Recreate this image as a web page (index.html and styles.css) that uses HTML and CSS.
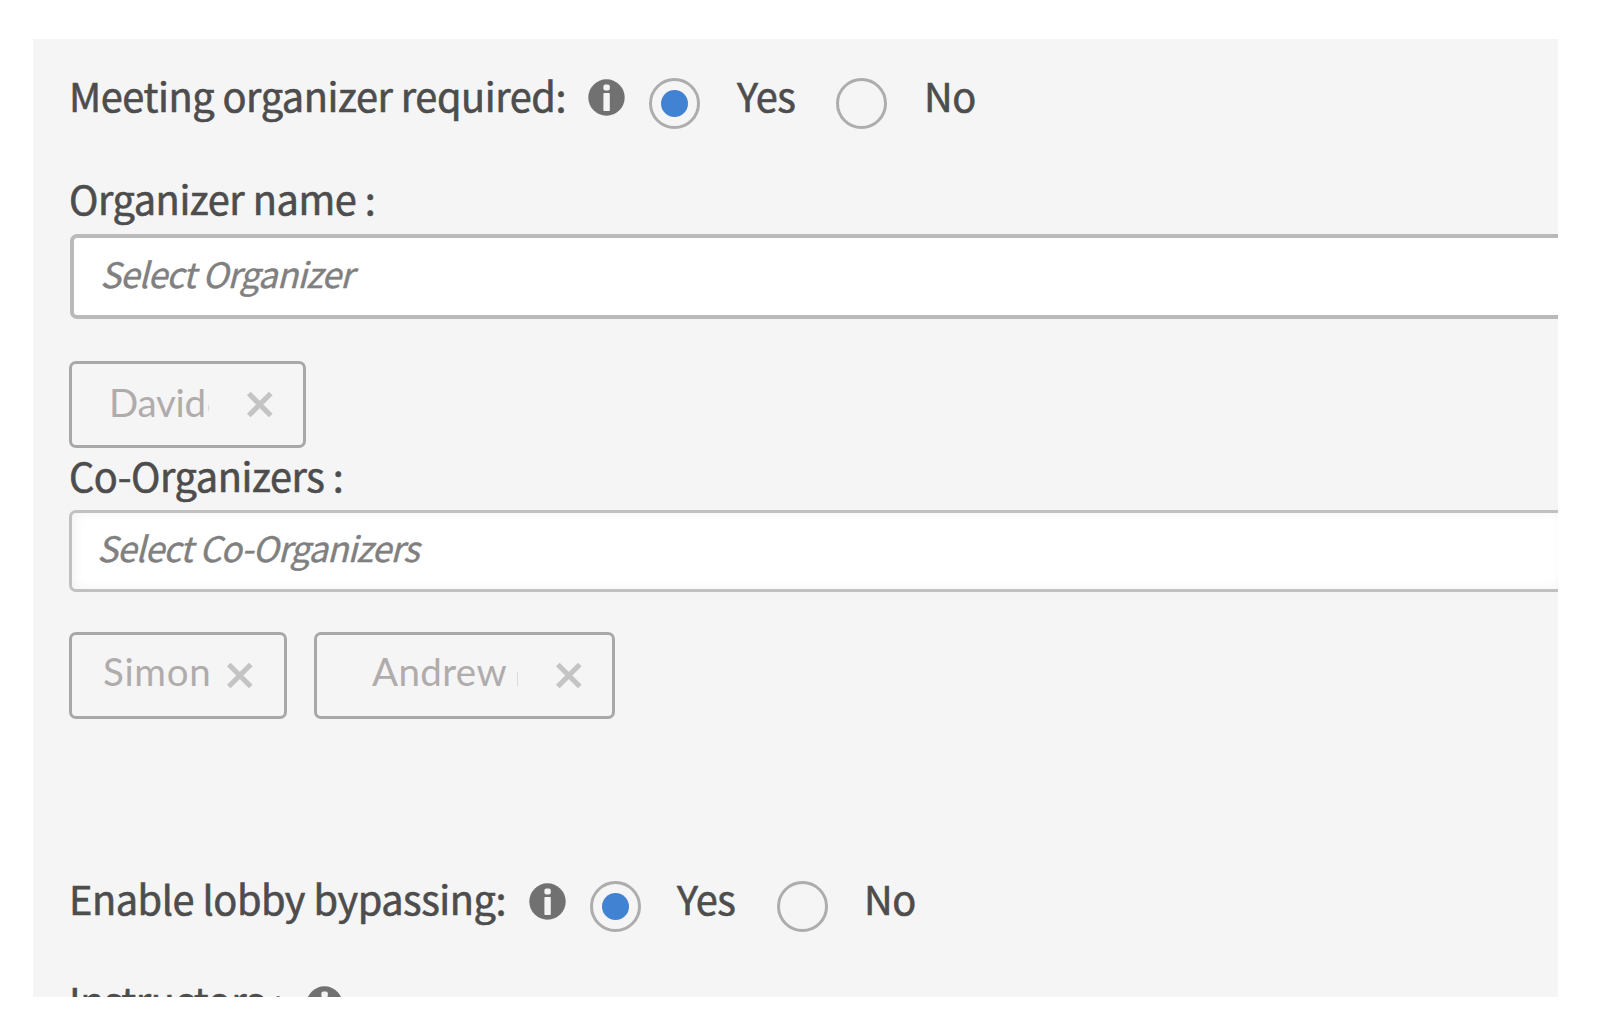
FILE: index.html
```html
<!DOCTYPE html>
<html lang="en">
<head>
<meta charset="utf-8">
<title>Meeting settings</title>
<link rel="stylesheet" href="styles.css">
</head>
<body>
<svg width="0" height="0" class="defs">
  <symbol id="info" viewBox="0 0 37 37"><circle cx="18.5" cy="18.5" r="18.2" fill="#717171"/><rect x="15.4" y="5.5" width="6.4" height="6" rx="2" fill="#f4f4f4"/><rect x="15.4" y="14" width="6.4" height="18" rx=".8" fill="#f4f4f4"/></symbol>
  <symbol id="close" viewBox="0 0 28 28"><path d="M2.8 2.5 24.8 24.5M24.8 2.5 2.8 24.5" stroke="#c4c4c4" stroke-width="5.2" fill="none"/></symbol>
</svg>
<main class="panel">
  <div class="row required">
    <span class="label">Meeting organizer required:</span>
    <svg class="info"><use href="#info"/></svg>
    <span class="radio on"></span><span class="option yes">Yes</span>
    <span class="radio"></span><span class="option no">No</span>
  </div>
  <div class="row name"><span class="label">Organizer name :</span></div>
  <div class="field organizer"><span>Select Organizer</span></div>
  <div class="chips first">
    <div class="chip david"><span>David</span><i class="tick"></i><svg class="close"><use href="#close"/></svg></div>
  </div>
  <div class="row co"><span class="label">Co-Organizers :</span></div>
  <div class="field coorganizers"><span>Select Co-Organizers</span></div>
  <div class="chips second">
    <div class="chip simon"><span>Simon</span><svg class="close"><use href="#close"/></svg></div>
    <div class="chip andrew"><span>Andrew</span><i class="tick"></i><svg class="close"><use href="#close"/></svg></div>
  </div>
  <div class="row lobby">
    <span class="label">Enable lobby bypassing:</span>
    <svg class="info"><use href="#info"/></svg>
    <span class="radio on"></span><span class="option yes">Yes</span>
    <span class="radio"></span><span class="option no">No</span>
  </div>
  <div class="row instructors">
    <span class="label">Instructors :</span>
    <svg class="info"><use href="#info"/></svg>
  </div>
</main>
</body>
</html>
```

FILE: styles.css
```css
* { box-sizing: border-box; }
body {
  margin: 0;
  background: #fff;
  font-family: "Noto Sans CJK SC", "Noto Sans", sans-serif;
  color: #4d4d4d;
}
.defs { position: absolute; }
.panel {
  width: 1525px;
  height: 958px;
  margin: 39px 0 0 33px;
  padding: 28px 0 0 36px;
  background: #f5f5f5;
  overflow: hidden;
}
.row {
  display: flex;
  align-items: center;
  height: 52px;
  font-size: 39.7px;
  letter-spacing: -.45px;
  line-height: 52px;
  white-space: nowrap;
  -webkit-text-stroke: .6px #4d4d4d;
}
.label, .option { flex: none; padding-top: 1px; }
.required .label, .required .option, .name .label { padding-top: 3px; }
.required .label { width: 519px; }
.lobby .label { width: 460px; }
.instructors .label { width: 237px; padding-top: 0; }
.info { flex: none; width: 37px; height: 37px; margin-top: 9px; }
.radio {
  flex: none;
  display: grid;
  place-items: center;
  width: 51px;
  height: 51px;
  margin: 20px 0 0 24px;
  border: 3px solid #adadad;
  border-radius: 50%;
}
.lobby .radio { margin-top: 19px; }
.on::after {
  content: "";
  width: 27px;
  height: 27px;
  border-radius: 50%;
  background: #4282d3;
}
.yes { width: 99px; margin-left: 37px; }
.lobby .yes { width: 100px; margin-left: 36px; }
.yes + .radio { margin-left: 0; }
.no { margin-left: 37px; }
.lobby .no { margin-left: 36px; }

.name { margin-top: 51px; }
.field {
  border: 4px solid #bababa;
  border-right: 0;
  border-radius: 7px 0 0 7px;
  background: #fff;
  font-size: 35px;
  font-style: italic;
  letter-spacing: -.85px;
  color: #808080;
  white-space: nowrap;
  -webkit-text-stroke: .4px #808080;
}
.organizer { height: 85px; margin: 12px 0 0 1px; padding-left: 26px; line-height: 70px; }
.coorganizers {
  height: 82px;
  margin-top: 10px;
  padding-left: 25px;
  border-width: 3px 0 3px 3px;
  border-color: #c1c1c1;
  line-height: 68px;
  box-shadow: inset 3px 0 12px #f3f3f3;
}

.chips { display: flex; gap: 27px; }
.first { margin-top: 42px; }
.second { margin-top: 40px; }
.chip {
  display: flex;
  align-items: center;
  height: 87px;
  border: 3px solid #a8a8a8;
  border-radius: 7px;
  font-family: Lato, sans-serif;
  font-size: 38.5px;
  color: #b0acac;
}
.chip span { flex: none; white-space: nowrap; line-height: 60px; margin-top: -9px; }
.first .chip span { margin-top: -5px; }
.close { flex: none; width: 28px; height: 28px; }
.david { width: 237px; padding-left: 37px; letter-spacing: -.3px; }
.david span { width: 99px; }
.simon { width: 218px; padding-left: 31px; letter-spacing: .7px; }
.simon span { width: 123px; }
.andrew { width: 301px; padding-left: 55px; letter-spacing: .4px; }
.andrew span { width: 145px; }
.tick { width: 1px; height: 6px; margin-top: 6px; background: #dadada; }
.david .tick { margin-right: 37px; }
.andrew .tick { height: 14px; margin-right: 37px; }

.lobby { margin-top: 152px; }
.instructors { margin-top: 51px; }
```
